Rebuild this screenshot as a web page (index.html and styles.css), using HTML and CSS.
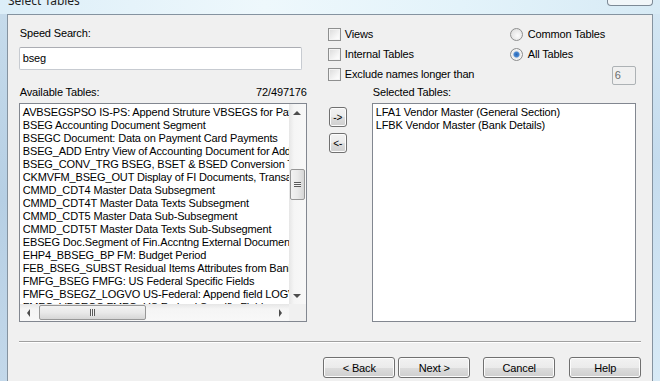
FILE: index.html
```html
<!DOCTYPE html>
<html lang="en">
<head>
  <meta charset="UTF-8">
  <title>Select Tables</title>
  <link rel="stylesheet" href="styles.css">
</head>
<body>

  <div class="window">
    <!-- Barra de titulo (cortada no topo) -->
    <div class="titlebar">
      <span class="title">Select Tables</span>
      <span class="close-btn"></span>
    </div>

    <div class="frame">
      <div class="glass"></div>

      <div class="client">
        <!-- Busca e opcoes -->
        <div class="top">
          <div class="search">
            <div class="lbl">Speed Search:</div>
            <div class="textbox">bseg</div>
          </div>

          <div class="options">
            <div class="opt"><span class="check"></span>Views</div>
            <div class="opt"><span class="radio"></span>Common Tables</div>
            <div class="opt"><span class="check"></span>Internal Tables</div>
            <div class="opt"><span class="radio on"></span>All Tables</div>
            <div class="opt"><span class="check"></span>Exclude names longer than</div>
            <div class="smallbox">6</div>
          </div>
        </div>

        <!-- Listas -->
        <div class="lists">
          <div class="col-left">
            <div class="lbl-row">
              <span>Available Tables:</span>
              <span>72/497176</span>
            </div>
            <div class="listbox">
              <div class="items">
                <div>AVBSEGSPSO IS-PS: Append Struture VBSEGS for Payment Requests</div>
                <div>BSEG Accounting Document Segment</div>
                <div>BSEGC Document: Data on Payment Card Payments</div>
                <div>BSEG_ADD Entry View of Accounting Document for Additional Ledgers</div>
                <div>BSEG_CONV_TRG BSEG, BSET &amp; BSED Conversion Trigger</div>
                <div>CKMVFM_BSEG_OUT Display of FI Documents, Transactions</div>
                <div>CMMD_CDT4 Master Data Subsegment</div>
                <div>CMMD_CDT4T Master Data Texts Subsegment</div>
                <div>CMMD_CDT5 Master Data Sub-Subsegment</div>
                <div>CMMD_CDT5T Master Data Texts Sub-Subsegment</div>
                <div>EBSEG Doc.Segment of Fin.Accntng External Document</div>
                <div>EHP4_BBSEG_BP FM: Budget Period</div>
                <div>FEB_BSEG_SUBST Residual Items Attributes from Bank</div>
                <div>FMFG_BSEG FMFG: US Federal Specific Fields</div>
                <div>FMFG_BSEGZ_LOGVO US-Federal: Append field LOGVO</div>
                <div>FMFG_VBSEGS FMFG: US Federal Specific Fields</div>
              </div>
              <div class="vscroll">
                <div class="arrow"><span class="tri up"></span></div>
                <div class="vgap"></div>
                <div class="vthumb"><span class="grip-h"></span></div>
                <div class="fill"></div>
                <div class="arrow"><span class="tri down"></span></div>
              </div>
              <div class="hscroll">
                <div class="arrow"><span class="tri left"></span></div>
                <div class="hgap"></div>
                <div class="hthumb"><span class="grip-v"></span></div>
                <div class="fill"></div>
                <div class="arrow"><span class="tri right"></span></div>
              </div>
              <div class="corner"></div>
            </div>
          </div>

          <div class="movers">
            <button class="btn small">-&gt;</button>
            <button class="btn small">&lt;-</button>
          </div>

          <div class="col-right">
            <div class="lbl-row">
              <span>Selected Tables:</span>
            </div>
            <div class="listbox plain">
              <div>LFA1 Vendor Master (General Section)</div>
              <div>LFBK Vendor Master (Bank Details)</div>
            </div>
          </div>
        </div>

        <div class="separator"></div>

        <div class="buttons">
          <button class="btn">&lt; Back</button>
          <button class="btn next">Next &gt;</button>
          <button class="btn wide">Cancel</button>
          <button class="btn wide">Help</button>
        </div>
      </div>

      <div class="glass right"></div>
    </div>
  </div>

</body>
</html>
```

FILE: styles.css
```css
/* Geral */
body {
  margin: 0;
  padding: 0;
  width: 660px;
  height: 381px;
  overflow: hidden;
  font-family: "Liberation Sans", Arial, sans-serif;
  font-size: 11px;
  letter-spacing: -0.15px;
  color: #000;
}

.window {
  display: flex;
  flex-direction: column;
  height: 381px;
}

/* Barra de titulo */
.titlebar {
  height: 14px;
  display: flex;
  justify-content: space-between;
  align-items: flex-start;
  overflow: hidden;
  background: linear-gradient(90deg, #dceef8, #eef8fc 40%, #e3f3fa 70%, #d7eaf5);
}

.title {
  font-family: "Noto Sans", sans-serif;
  font-size: 12px;
  letter-spacing: 0;
  line-height: 14px;
  margin-top: -6px;
  margin-left: 8px;
  color: #1e1e1e;
}

.close-btn {
  width: 44px;
  height: 5px;
  margin-right: 7px;
  border: 1px solid #7d8a96;
  border-top: none;
  border-radius: 0 0 4px 4px;
  background: #f1f6f9;
}

/* Moldura */
.frame {
  flex: 1;
  display: flex;
}

.glass {
  width: 7px;
  background: linear-gradient(180deg, #c6dbeb, #b6cfe4 50%, #c3d8ea);
}

.glass.right {
  background: linear-gradient(180deg, #d3e6f3, #c5dcee 40%, #d8eaf6);
}

.client {
  width: 644px;
  background: #f0f0f0;
  border: 1px solid #8593a0;
  border-bottom: none;
  display: flex;
  flex-direction: column;
  padding: 0 11px;
}

/* Topo */
.top {
  display: flex;
  align-items: flex-start;
  padding-top: 9px;
  height: 60px;
}

.search {
  width: 283px;
  padding-top: 3px;
}

.lbl {
  line-height: 13px;
  padding-left: 1px;
}

.textbox {
  margin-top: 7px;
  height: 21px;
  line-height: 21px;
  padding-left: 3px;
  background: #fff;
  border: 1px solid #c7cbd1;
  border-top-color: #abadb3;
  border-radius: 2px;
}

.options {
  margin-left: 26px;
  width: 308px;
  display: grid;
  grid-template-columns: 182px 1fr;
  grid-template-rows: 20px 20px 20px;
}

.opt {
  display: flex;
  align-items: center;
  white-space: nowrap;
}

.check {
  width: 11px;
  height: 11px;
  margin-right: 4px;
  border: 1px solid #8e8f8f;
  background: linear-gradient(135deg, #dadada, #f7f7f7 70%, #fff);
  box-shadow: inset 0 0 0 1px #f4f4f4;
}

.radio {
  width: 11px;
  height: 11px;
  margin-right: 5px;
  border: 1px solid #8e8f8f;
  border-radius: 50%;
  background: radial-gradient(circle at 60% 60%, #fbfbfb, #d8d8d8);
}

.radio.on {
  background: radial-gradient(circle, #2a64b0 0, #4a8ad4 2.5px, #e6e6e6 3.5px, #f6f6f6 5px, #cfcfcf 6px);
}

.smallbox {
  justify-self: end;
  margin-top: 2px;
  width: 20px;
  height: 17px;
  line-height: 17px;
  padding-left: 2px;
  background: #f0f0f0;
  border: 1px solid #adb2b5;
  border-radius: 2px;
  color: #6d6d6d;
}

/* Listas */
.lists {
  display: flex;
  margin-top: 2px;
}

.col-left {
  width: 288px;
}

.lbl-row {
  display: flex;
  justify-content: space-between;
  line-height: 13px;
  padding-left: 1px;
  margin-bottom: 4px;
}

.listbox {
  height: 217px;
  background: #fff;
  border: 1px solid #828790;
  display: grid;
  grid-template-columns: 1fr 17px;
  grid-template-rows: 1fr 17px;
  overflow: hidden;
}

.items {
  padding: 2px 0 0 3px;
  line-height: 13px;
  white-space: nowrap;
  overflow: hidden;
}

.listbox.plain {
  display: block;
  width: 259px;
  padding: 2px 0 0 3px;
  line-height: 13px;
  height: 215px;
}

/* Barras de rolagem */
.vscroll {
  display: flex;
  flex-direction: column;
  background: linear-gradient(90deg, #e6e6e6, #f5f5f5 30%, #f8f8f8);
}

.hscroll {
  display: flex;
  background: linear-gradient(180deg, #e6e6e6, #f5f5f5 30%, #f8f8f8);
}

.corner {
  background: #f0f0f0;
}

.arrow {
  width: 17px;
  height: 17px;
  display: flex;
  align-items: center;
  justify-content: center;
  flex: none;
}

.tri {
  width: 0;
  height: 0;
  border: 4px solid transparent;
}

.tri.up { border-bottom-color: #4d4d4d; border-top-width: 0; }
.tri.down { border-top-color: #4d4d4d; border-bottom-width: 0; }
.tri.left { border-right-color: #4d4d4d; border-width: 4px 3px 4px 0; }
.tri.right { border-left-color: #4d4d4d; border-width: 4px 0 4px 3px; }

.vgap { height: 48px; }
.hgap { width: 2px; }
.fill { flex: 1; }

.vthumb {
  height: 29px;
  margin: 0 1px;
  border: 1px solid #979797;
  border-radius: 2px;
  background: linear-gradient(90deg, #f2f2f2, #e9e9e9 50%, #d6d6d6);
  display: flex;
  align-items: center;
  justify-content: center;
}

.hthumb {
  width: 105px;
  margin: 1px 0;
  border: 1px solid #979797;
  border-radius: 2px;
  background: linear-gradient(180deg, #f2f2f2, #e9e9e9 50%, #d6d6d6);
  display: flex;
  align-items: center;
  justify-content: center;
}

.grip-h {
  width: 7px;
  height: 5px;
  background: repeating-linear-gradient(180deg, #5a5a5a 0 1px, #f4f4f4 1px 2px);
}

.grip-v {
  width: 5px;
  height: 7px;
  background: repeating-linear-gradient(90deg, #5a5a5a 0 1px, #f4f4f4 1px 2px);
}

/* Botoes */
.movers {
  width: 18px;
  margin-left: 22px;
  margin-right: 25px;
  padding-top: 21px;
  display: flex;
  flex-direction: column;
  gap: 6px;
}

.btn {
  font-family: "Liberation Sans", Arial, sans-serif;
  font-size: 11px;
  letter-spacing: -0.15px;
  color: #000;
  width: 72px;
  height: 21px;
  padding: 0;
  border: 1px solid #707070;
  border-radius: 3px;
  background: linear-gradient(180deg, #f2f2f2 0, #ebebeb 50%, #dddddd 51%, #cfcfcf 100%);
  box-shadow: inset 0 0 0 1px #fcfcfc;
}

.btn.small {
  width: 18px;
  height: 20px;
  font-size: 10px;
  letter-spacing: 0;
}

.col-right {
  width: 265px;
}

.separator {
  margin-top: 19px;
  border-top: 1px solid #a0a0a0;
  border-bottom: 1px solid #fff;
}

.buttons {
  display: flex;
  justify-content: flex-end;
  margin-top: 14px;
  gap: 3px;
}

.btn.next {
  margin-right: 10px;
}

.btn.wide + .btn.wide {
  margin-left: 11px;
}
```
